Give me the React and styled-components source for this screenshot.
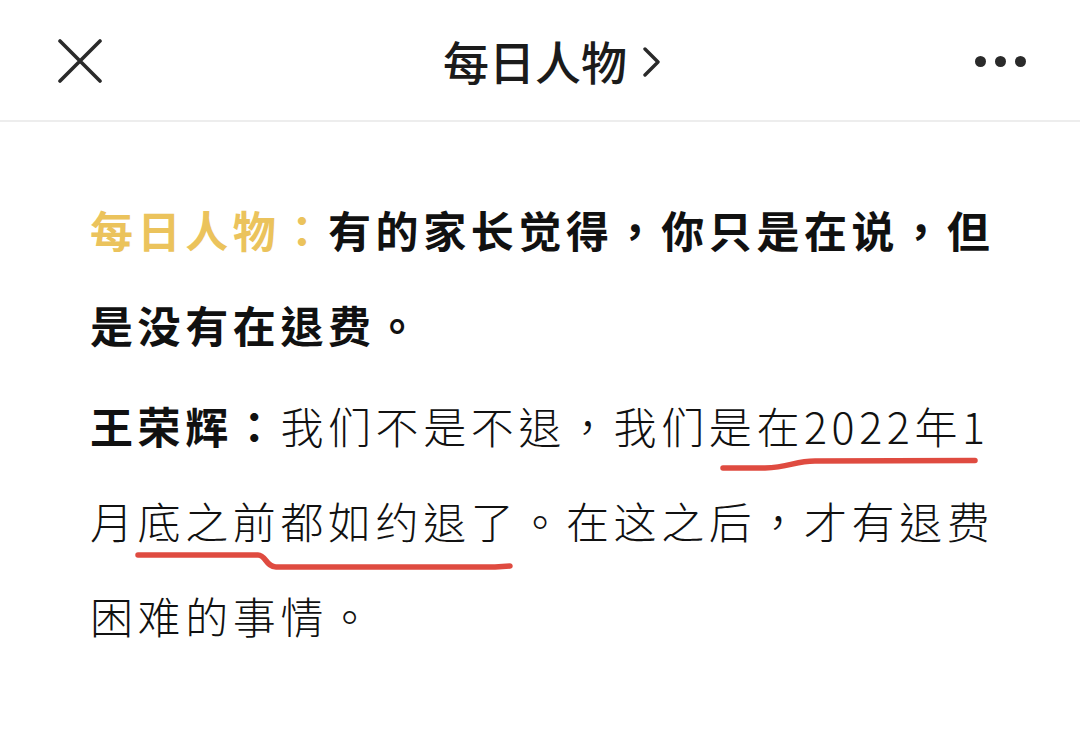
import React from "react";
import styled, { createGlobalStyle } from "styled-components";

const Global = createGlobalStyle`
	html, body {
		margin: 0;
		padding: 0;
		background: #fff;
	}
	body {
		font-family: "Noto Sans CJK SC", "Noto Sans", sans-serif;
		color: #1a1a1a;
	}
`;

export default () => {
	return (
		<>
			<Global />
			<Page>
				<TopBar>
					<IconButton aria-label="close">
						<svg width="44" height="44" viewBox="0 0 44 44">
							<path d="M2 2 L42 42 M42 2 L2 42" stroke="#2a2a2a" strokeWidth="3.6" strokeLinecap="round" />
						</svg>
					</IconButton>
					<Title>
						每日人物
						<svg width="18" height="30" viewBox="0 0 18 30">
							<path d="M2 2 L15 15 L2 28" fill="none" stroke="#2a2a2a" strokeWidth="3.4" strokeLinecap="round" strokeLinejoin="round" />
						</svg>
					</Title>
					<IconButton aria-label="more" className="more">
						<Dot />
						<Dot />
						<Dot />
					</IconButton>
				</TopBar>
				<Article>
					<Para bold>
						<Speaker>每日人物：</Speaker>有的家长觉得，你只是在说，但
						<br />
						是没有在退费。
					</Para>
					<Para gap>
						<b>王荣辉：</b>我们不是不退，我们是在2022年1
						<br />
						月底之前都如约退了。在这之后，才有退费
						<br />
						困难的事情。
					</Para>
					<Marks width="1080" height="640" viewBox="0 124 1080 640">
						<path d="M723 470 L765 470 C790 469 795 463 815 463 L975 462.5" />
						<path d="M138 557 L258 557 C266 557 266 569 276 569 L495 569 L510 568" />
					</Marks>
				</Article>
			</Page>
		</>
	);
};

const Page = styled.div`
	width: 1080px;
	min-height: 750px;
	background: #fff;
`;

const TopBar = styled.header`
	height: 122px;
	border-bottom: 2px solid #ededed;
	display: flex;
	align-items: center;
	justify-content: space-between;
	padding: 0 52px 0 56px;
	box-sizing: border-box;
`;

const IconButton = styled.div`
	width: 48px;
	height: 48px;
	display: flex;
	align-items: center;
	justify-content: center;
	gap: 9px;
	margin-top: 2px;
	&.more {
		width: 56px;
	}
`;

const Dot = styled.span`
	width: 11px;
	height: 11px;
	border-radius: 50%;
	background: #2a2a2a;
	flex: none;
`;

const Title = styled.div`
	display: flex;
	align-items: center;
	gap: 16px;
	font-size: 46px;
	font-weight: 500;
	color: #1b1b1b;
	margin-left: 28px;
	svg {
		margin-top: 4px;
	}
`;

const Article = styled.main`
	position: relative;
	padding: 60px 0 0 90px;
`;

const Para = styled.p`
	margin: ${(p) => (p.gap ? "6px" : "0")} 0 0;
	font-family: "Noto Sans CJK TC", "Noto Sans CJK SC", sans-serif;
	font-size: 43px;
	line-height: 95px;
	letter-spacing: 4.6px;
	white-space: nowrap;
	font-weight: ${(p) => (p.bold ? 700 : 300)};
	color: #111;
	b {
		font-weight: 700;
	}
`;

const Speaker = styled.span`
	color: #ebc35c;
`;

const Marks = styled.svg`
	position: absolute;
	left: 0;
	top: 0;
	pointer-events: none;
	path {
		fill: none;
		stroke: #df4b40;
		stroke-width: 5.5;
		stroke-linecap: round;
		stroke-linejoin: round;
	}
`;
